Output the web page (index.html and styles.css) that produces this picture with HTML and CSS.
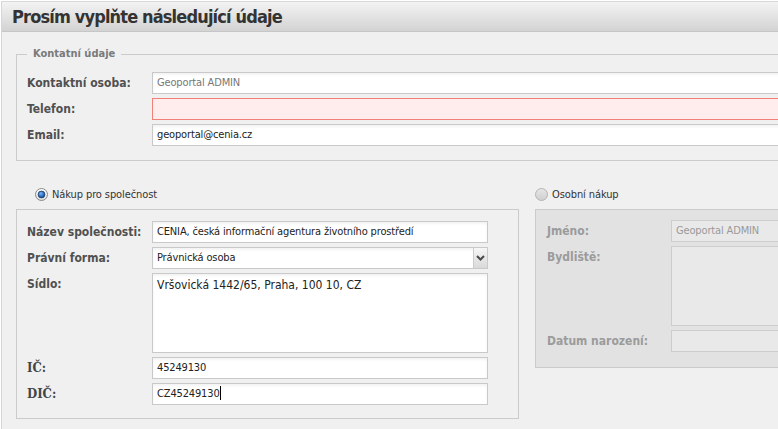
FILE: index.html
```html
<!DOCTYPE html>
<html lang="cs">
<head>
<meta charset="utf-8">
<title>Prosím vyplňte následující údaje</title>
<link rel="stylesheet" href="styles.css">
</head>
<body>
<div class="win">
  <div class="hdr"><h1 class="title">Prosím vyplňte následující údaje</h1></div>
  <div class="content">
    <fieldset class="contact">
      <legend class="legend">Kontatní údaje</legend>
      <div class="grid">
        <div class="lbl">Kontaktní osoba:</div><div class="field ro">Geoportal ADMIN</div>
        <div class="lbl">Telefon:</div><div class="field err"></div>
        <div class="lbl">Email:</div><div class="field">geoportal@cenia.cz</div>
      </div>
    </fieldset>

    <div class="purchase">
      <div class="col col-company">
        <div class="radio-row radio-left">
          <svg class="radio" width="13" height="13" viewBox="0 0 13 13"><defs><linearGradient id="ro1" x1="0" y1="0" x2="0" y2="1"><stop offset="0" stop-color="#ffffff"/><stop offset="1" stop-color="#dcdcdc"/></linearGradient><radialGradient id="ri1" cx="0.4" cy="0.35" r="0.7"><stop offset="0" stop-color="#7fb6f0"/><stop offset="0.6" stop-color="#2a6fc4"/><stop offset="1" stop-color="#173f78"/></radialGradient></defs><circle cx="6.5" cy="6.5" r="6" fill="url(#ro1)" stroke="#8a8a8a"/><circle cx="6.5" cy="6.5" r="3.4" fill="url(#ri1)" stroke="#1d3d6b" stroke-width="0.8"/></svg>
          <span>Nákup pro společnost</span>
        </div>
        <div class="box box-company">
          <div class="grid grid-company">
            <div class="lbl">Název společnosti:</div><div class="field">CENIA, česká informační agentura životního prostředí</div>
            <div class="lbl">Právní forma:</div>
            <div class="field select"><span class="sel-text">Právnická osoba</span><span class="sel-btn"><svg width="9" height="6" viewBox="0 0 9 6"><path d="M1 1 L4.5 4.5 L8 1" stroke="#4a4a4a" stroke-width="2" fill="none"/></svg></span></div>
            <div class="lbl">Sídlo:</div><div class="field area">Vršovická 1442/65, Praha, 100 10, CZ</div>
            <div class="lbl serif">IČ:</div><div class="field">45249130</div>
            <div class="lbl serif">DIČ:</div><div class="field">CZ45249130<span class="caret"></span></div>
          </div>
        </div>
      </div>

      <div class="col col-personal">
        <div class="radio-row">
          <svg class="radio" width="13" height="13" viewBox="0 0 13 13"><defs><linearGradient id="ro2" x1="0" y1="0" x2="0" y2="1"><stop offset="0" stop-color="#e6e6e6"/><stop offset="1" stop-color="#cfcfcf"/></linearGradient></defs><circle cx="6.5" cy="6.5" r="6" fill="url(#ro2)" stroke="#b4b4b4"/></svg>
          <span>Osobní nákup</span>
        </div>
        <div class="box box-personal">
          <div class="grid grid-personal">
            <div class="lbl">Jméno:</div><div class="field dis">Geoportal ADMIN</div>
            <div class="lbl">Bydliště:</div><div class="field dis area"></div>
            <div class="lbl">Datum narození:</div><div class="field dis"></div>
          </div>
        </div>
      </div>
    </div>
  </div>
</div>
</body>
</html>
```

FILE: styles.css
```css
html, body {
  margin: 0;
  padding: 0;
  background: #ffffff;
  overflow: hidden;
}

body {
  font-family: "DejaVu Sans Condensed", "DejaVu Sans", sans-serif;
  font-size: 11px;
  color: #333333;
}

.win {
  margin: 1px 0 0 1px;
  border-left: 1px solid #d6d6d6;
  border-top: 1px solid #d8d8d8;
  background: #f0f0f0;
  height: 440px;
}

.hdr {
  height: 29px;
  padding-left: 10px;
  background: linear-gradient(#f3f3f3, #d3d3d3);
  border-bottom: 1px solid #c6c6c6;
}

.title {
  margin: 0;
  font-size: 18px;
  line-height: 29px;
  font-weight: bold;
  color: #333333;
  letter-spacing: -0.85px;
  white-space: nowrap;
}

.content {
  padding: 15px 0 0 14px;
}

.contact {
  margin: 0;
  width: 900px;
  padding: 11px 0 14px 10px;
  border: 1px solid #cbcbcb;
}

.legend {
  padding: 0 6px;
  font-weight: bold;
  font-size: 11px;
  line-height: 14px;
  color: #7a7a7a;
}

.grid {
  display: grid;
  grid-template-columns: 125px 1fr;
  row-gap: 4px;
  align-items: start;
}

.lbl {
  font-weight: bold;
  font-size: 12px;
  line-height: 22px;
  color: #505050;
  white-space: nowrap;
}

.lbl.serif {
  font-family: "DejaVu Serif Condensed", "DejaVu Serif", serif;
  font-size: 13px;
  color: #444444;
}

.field {
  height: 22px;
  box-sizing: border-box;
  border: 1px solid #c9c9c9;
  background: #ffffff;
  box-shadow: inset 0 2px 3px rgba(0, 0, 0, 0.05);
  padding: 0 4px;
  line-height: 20px;
  color: #222222;
  letter-spacing: -0.15px;
  white-space: nowrap;
  overflow: hidden;
}

.field.ro {
  color: #777777;
}

.field.err {
  border-color: #f08078;
  background: #ffeded;
  box-shadow: none;
}

.field.area {
  height: 80px;
  font-size: 12px;
  line-height: 16px;
  padding-top: 3px;
  letter-spacing: 0;
  white-space: normal;
}

.field.select {
  display: flex;
  padding-right: 0;
}

.sel-text {
  flex: 1;
}

.sel-btn {
  width: 13px;
  height: 20px;
  border-left: 1px solid #cccccc;
  background: linear-gradient(#f6f6f6, #d9d9d9);
  display: flex;
  align-items: center;
  justify-content: center;
}

.caret {
  display: inline-block;
  width: 1px;
  height: 14px;
  background: #000000;
  vertical-align: -3px;
}

.purchase {
  display: flex;
  gap: 16px;
  align-items: flex-start;
}

.col-company {
  flex: 0 0 503px;
}

.col-personal {
  flex: 0 0 400px;
}

.radio-row {
  height: 16px;
  margin: 25px 0 7px;
  display: flex;
  align-items: center;
  gap: 4px;
  color: #333333;
  letter-spacing: -0.1px;
}

.radio-left {
  padding-left: 19px;
}

.radio {
  display: block;
  flex: 0 0 13px;
}

.box {
  box-sizing: border-box;
  border: 1px solid #cbcbcb;
}

.box-company {
  width: 503px;
  padding: 11px 0 13px 10px;
}

.grid-company {
  grid-template-columns: 125px 336px;
}

.box-personal {
  width: 400px;
  background: #e2e2e2;
  padding: 10px 0 15px 11px;
}

.box-personal .lbl {
  color: #9b9b9b;
}

.grid-personal {
  grid-template-columns: 124px 1fr;
}

.field.dis {
  background: #e9e9e9;
  border-color: #cdcdcd;
  box-shadow: none;
  color: #9a9a9a;
}
```
